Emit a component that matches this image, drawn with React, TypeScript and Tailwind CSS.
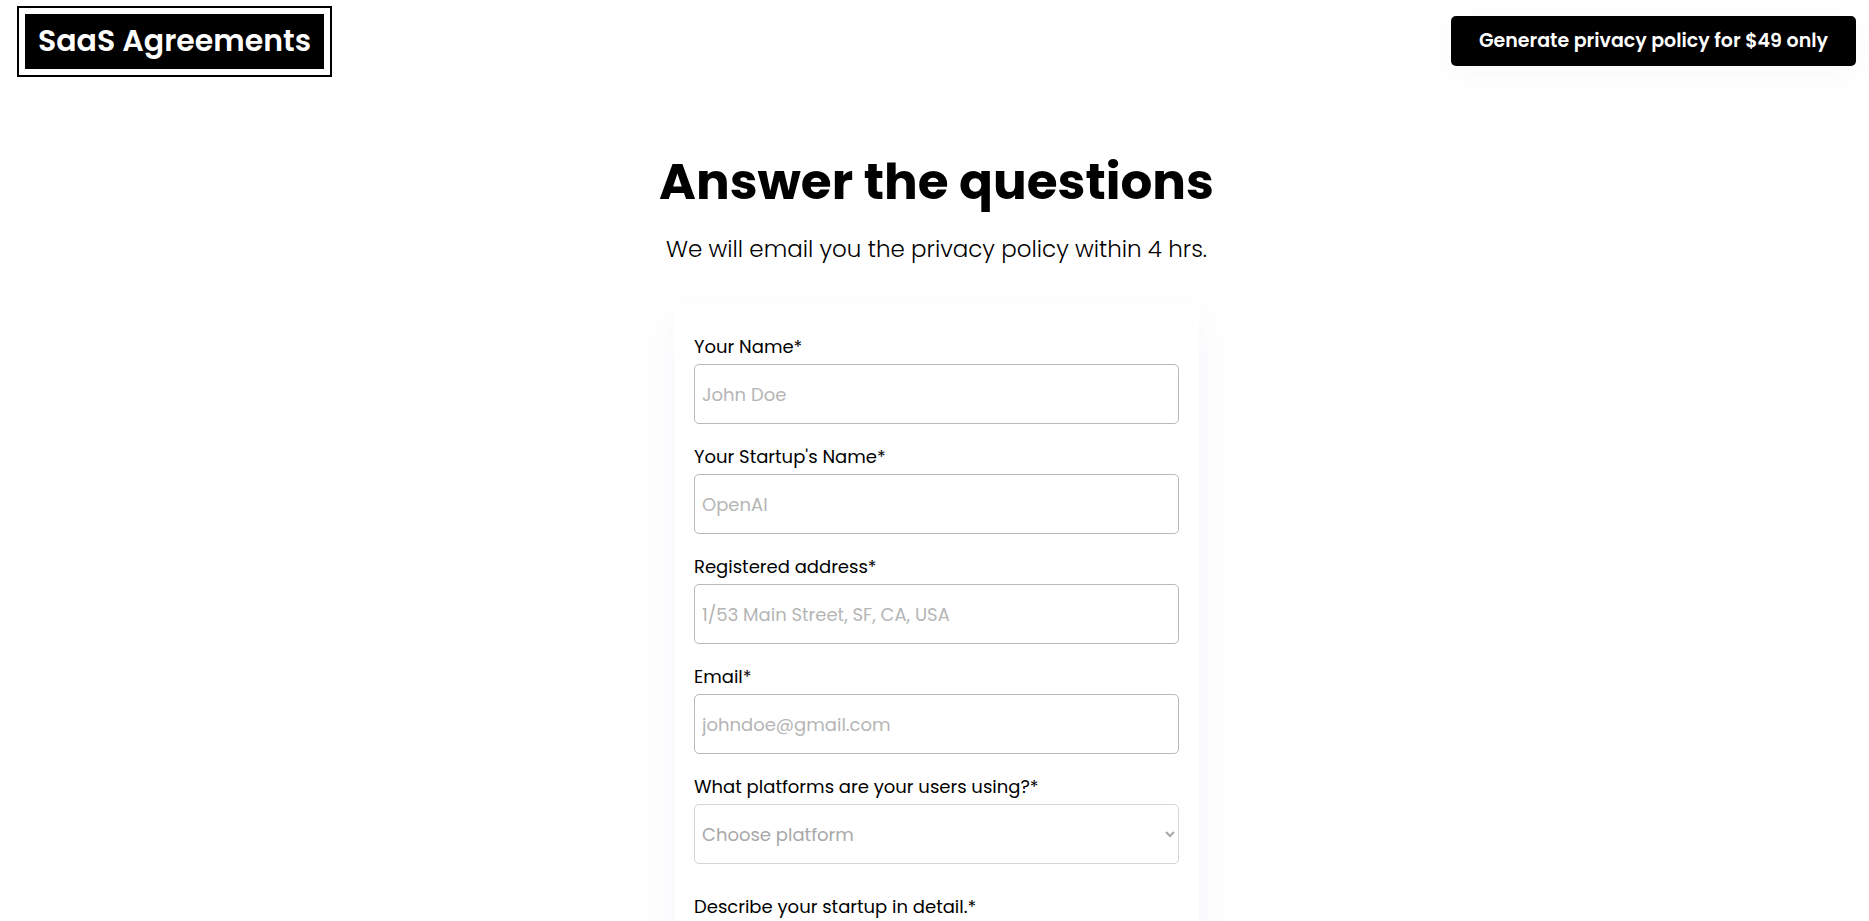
import { useState } from 'react';

const fields = [
  { id: 'name', label: 'Your Name*', type: 'text', placeholder: 'John Doe' },
  { id: 'startup', label: "Your Startup's Name*", type: 'text', placeholder: 'OpenAI' },
  { id: 'address', label: 'Registered address*', type: 'text', placeholder: '1/53 Main Street, SF, CA, USA' },
  { id: 'email', label: 'Email*', type: 'email', placeholder: 'johndoe@gmail.com' },
];

export default function App() {
  const [values, setValues] = useState<Record<string, string>>({});
  const [platform, setPlatform] = useState('');
  const [description, setDescription] = useState('');

  return (
    <div className="min-h-screen bg-white pl-[17px] pr-[13px] font-['Poppins','Inter',sans-serif] text-black">
      <header className="flex items-start justify-between pt-[6px]">
        <a href="/" className="border-2 border-black p-[6px]">
          <span className="block bg-black px-[13px] pt-1 pb-[6px] text-[30px] leading-[45px] font-semibold text-white">
            SaaS Agreements
          </span>
        </a>
        <button
          type="button"
          className="mt-[10px] h-[50px] rounded-[5px] bg-black px-7 text-[19px] font-semibold text-white shadow-[0_8px_30px_rgba(0,20,20,0.03)]"
        >
          Generate privacy policy for $49 only
        </button>
      </header>

      <main className="flex flex-col items-center pt-[67px]">
        <h1 className="text-center text-[50px] leading-[75px] font-bold">Answer the questions</h1>
        <p className="mt-3 text-center text-[23px] leading-[36px] font-light">
          We will email you the privacy policy within 4 hrs.
        </p>

        <form
          onSubmit={(e) => e.preventDefault()}
          className="mt-[37px] w-full max-w-[525px] bg-white px-5 py-[30px] text-[18px] leading-[26px] shadow-[0_16px_36px_rgba(60,90,150,0.06)]"
        >
          {fields.map((field) => (
            <div key={field.id} className="mb-5">
              <label htmlFor={field.id} className="block">
                {field.label}
              </label>
              <input
                id={field.id}
                type={field.type}
                placeholder={field.placeholder}
                value={values[field.id] ?? ''}
                onChange={(e) => setValues({ ...values, [field.id]: e.target.value })}
                className="mt-1 block h-[60px] w-full rounded-[5px] border border-[#b9b9b9] px-[7px] outline-none placeholder:text-[#b5b5b5]"
              />
            </div>
          ))}

          <div className="mb-[30px]">
            <label htmlFor="platform" className="block">
              What platforms are your users using?*
            </label>
            <select
              id="platform"
              value={platform}
              onChange={(e) => setPlatform(e.target.value)}
              className="mt-1 block h-[60px] w-full rounded-[5px] border border-[#d5d5d5] bg-white px-[3px] text-[#a8a8a8] outline-none"
            >
              <option value="">Choose platform</option>
            </select>
          </div>

          <div>
            <label htmlFor="description" className="block">
              Describe your startup in detail.*
            </label>
            <textarea
              id="description"
              rows={5}
              value={description}
              onChange={(e) => setDescription(e.target.value)}
              className="mt-1 block w-full rounded-[5px] border border-[#b9b9b9] p-[7px] outline-none"
            />
          </div>
        </form>
      </main>
    </div>
  );
}
